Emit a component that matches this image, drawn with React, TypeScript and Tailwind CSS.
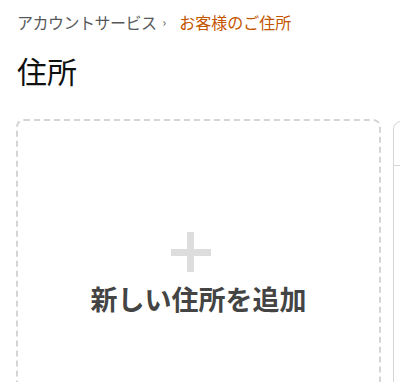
import React from "react";

export default function App() {
  return (
    <div
      className="w-[400px] h-[382px] overflow-hidden bg-white"
      style={{ fontFamily: '"Noto Sans CJK JP", "Noto Sans", sans-serif' }}
    >
      <div className="pl-[17px] pt-[11px]">
        <div className="flex items-center text-[16px] leading-[22px]">
          <span className="text-[#565959] tracking-[-0.5px]">アカウントサービス</span>
          <span className="ml-[6px] mr-[13px] text-[#565959] text-[12px]">›</span>
          <span className="text-[#c45500]">お客様のご住所</span>
        </div>
        <h1 className="mt-[19px] text-[30px] leading-[36px] text-[#0f1111] font-normal">住所</h1>
      </div>
      <div className="flex gap-[12px] pl-[16px] mt-[31px]">
        <div className="shrink-0 w-[365px] h-[290px] rounded-[8px] border-2 border-dashed border-[#d5d5d5] flex flex-col items-center">
          <div className="relative mt-[111px] mr-[15px] w-[40px] h-[40px]">
            <div className="absolute left-[16px] top-0 w-[7px] h-[40px] bg-[#dddddd]" />
            <div className="absolute left-0 top-[17px] w-[40px] h-[7px] bg-[#dddddd]" />
          </div>
          <div className="mt-[9px] text-[27px] leading-[36px] font-bold text-[#444444]">
            新しい住所を追加
          </div>
        </div>
        <div className="shrink-0 w-[365px] h-[290px] mt-[2px] rounded-[8px] border border-[#d5d5d5]">
          <div className="h-[44px] border-b border-[#d5d5d5]" />
        </div>
      </div>
    </div>
  );
}
